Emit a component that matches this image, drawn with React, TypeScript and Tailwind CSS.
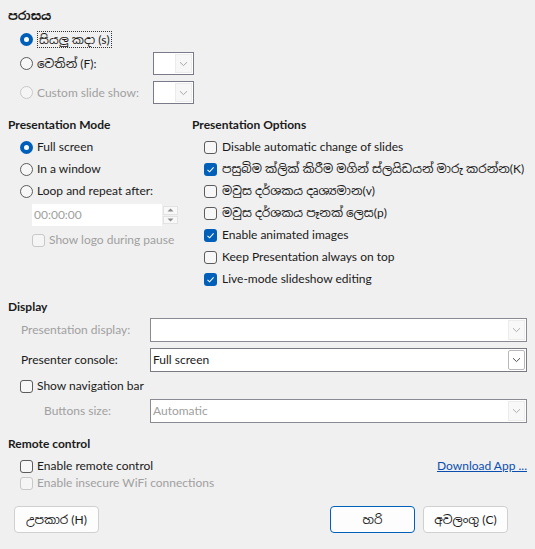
import React from "react";

const FONT = { fontFamily: 'Lato, "Noto Sans Sinhala", "Noto Sans", sans-serif' };

function Radio({ checked = false, disabled = false }: { checked?: boolean; disabled?: boolean }) {
  if (checked)
    return (
      <span className="w-[13px] h-[13px] shrink-0 rounded-full bg-[#005fb8] flex items-center justify-center">
        <span className="w-[5px] h-[5px] rounded-full bg-white" />
      </span>
    );
  return (
    <span
      className={
        disabled
          ? "w-[13px] h-[13px] shrink-0 rounded-full border border-[#c8c8c8] bg-[#f5f5f5]"
          : "w-[13px] h-[13px] shrink-0 rounded-full border border-[#5c5c5c] bg-[#f7f7f7]"
      }
    />
  );
}

function Check({ checked = false, disabled = false }: { checked?: boolean; disabled?: boolean }) {
  if (checked)
    return (
      <span className="w-[13px] h-[13px] shrink-0 rounded-[3px] bg-[#005fb8] flex items-center justify-center">
        <svg width="9" height="9" viewBox="0 0 9 9">
          <path d="M1.5 4.8 L3.6 6.8 L7.6 2.4" fill="none" stroke="white" strokeWidth="1.1" />
        </svg>
      </span>
    );
  return (
    <span
      className={
        disabled
          ? "w-[13px] h-[13px] shrink-0 rounded-[3px] border border-[#c8c8c8] bg-[#f5f5f5]"
          : "w-[13px] h-[13px] shrink-0 rounded-[3px] border border-[#5c5c5c] bg-[#f7f7f7]"
      }
    />
  );
}

function Chevron({ color = "#8a8a8a" }: { color?: string }) {
  return (
    <svg width="9" height="6" viewBox="0 0 9 6">
      <path d="M1 1.2 L4.5 4.6 L8 1.2" fill="none" stroke={color} strokeWidth="1" />
    </svg>
  );
}

function Combo({
  value = "",
  disabled = false,
  className = "",
}: {
  value?: string;
  disabled?: boolean;
  className?: string;
}) {
  return (
    <div
      className={
        "flex items-stretch bg-white border " +
        (disabled ? "border-[#8a8a92] " : "border-[#7a7a82] ") +
        className
      }
    >
      <div className={"flex-1 flex items-center pl-[2px] " + (disabled ? "text-[#a0a0a0]" : "text-[#1a1a1a]")}>
        {value}
      </div>
      <div
        className={
          disabled
            ? "w-[17px] my-[1px] mr-[1px] flex items-center justify-center bg-[#f8f8f8] border border-[#ececec]"
            : "w-[17px] my-[1px] mr-[1px] flex items-center justify-center bg-white border border-[#b8b8b8] rounded-[2px]"
        }
      >
        <Chevron color={disabled ? "#b0b0b0" : "#505050"} />
      </div>
    </div>
  );
}

function SmallCombo() {
  return (
    <div className="w-[41px] h-[23px] flex items-stretch bg-white border border-[#7a7a8a]">
      <div className="flex-1" />
      <div className="w-[17px] my-[1px] mr-[1px] flex items-center justify-center bg-[#f7f7f7] border border-[#ececec]">
        <Chevron color="#a8a8a8" />
      </div>
    </div>
  );
}

export default function App() {
  return (
    <div
      style={FONT}
      className="w-[535px] h-[549px] bg-[#f0f0f0] text-[12px] leading-[16px] text-[#1a1a1a] overflow-hidden relative"
    >
      {/* Range */}
      <div className="pl-[8px] pt-[6px]">
        <div className="h-[20px] flex items-center font-bold">පරාසය</div>
        <div className="pl-[12px] mt-[2px] flex flex-col">
          <div className="h-[22px] flex items-center gap-[4px]">
            <Radio checked />
            <span className="border border-dotted border-[#333] px-[1px] leading-[15px]">සියලු කදා (s)</span>
          </div>
          <div className="h-[23px] mt-[2px] flex items-center">
            <div className="w-[133px] flex items-center gap-[4px]">
              <Radio />
              <span>වෙතින් (F):</span>
            </div>
            <SmallCombo />
          </div>
          <div className="h-[23px] mt-[6px] flex items-center">
            <div className="w-[133px] flex items-center gap-[4px] text-[#a0a0a0]">
              <Radio disabled />
              <span>Custom slide show:</span>
            </div>
            <SmallCombo />
          </div>
        </div>
      </div>

      {/* Mode + Options */}
      <div className="flex mt-[11px]">
        <div className="w-[192px] pl-[8px]">
          <div className="h-[20px] flex items-center font-bold">Presentation Mode</div>
          <div className="pl-[12px] mt-[1px]">
            <div className="h-[22px] flex items-center gap-[4px]">
              <Radio checked />
              <span>Full screen</span>
            </div>
            <div className="h-[22px] flex items-center gap-[4px]">
              <Radio />
              <span>In a window</span>
            </div>
            <div className="h-[22px] flex items-center gap-[4px]">
              <Radio />
              <span>Loop and repeat after:</span>
            </div>
            <div className="pl-[12px] mt-[2px] flex items-stretch h-[22px]">
              <div className="w-[130px] bg-white flex items-center pl-[2px] text-[#a0a0a0]">00:00:00</div>
              <div className="w-[15px] ml-[1px] flex flex-col justify-center gap-[1px] py-[2px]">
                <div className="flex-1 flex items-center justify-center bg-[#f8f8f8] border border-[#e2e2e2]">
                  <svg width="7" height="4" viewBox="0 0 7 4">
                    <path d="M0.5 3.5 L3.5 0.5 L6.5 3.5 Z" fill="#8a8a8a" />
                  </svg>
                </div>
                <div className="flex-1 flex items-center justify-center bg-[#f8f8f8] border border-[#e2e2e2]">
                  <svg width="7" height="4" viewBox="0 0 7 4">
                    <path d="M0.5 0.5 L3.5 3.5 L6.5 0.5 Z" fill="#8a8a8a" />
                  </svg>
                </div>
              </div>
            </div>
            <div className="pl-[12px] h-[22px] mt-[3px] flex items-center gap-[4px] text-[#a0a0a0]">
              <Check disabled />
              <span className="whitespace-nowrap">Show logo during pause</span>
            </div>
          </div>
        </div>
        <div className="flex-1">
          <div className="h-[20px] flex items-center font-bold">Presentation Options</div>
          <div className="pl-[12px] mt-[1px]">
            {[
              [false, "Disable automatic change of slides"],
              [true, "පසුබිම ක්ලික් කිරීම මගින් ස්ලයිඩයන් මාරු කරන්න(K)"],
              [false, "මවුස දර්ශකය දෘශ්‍යමාන(v)"],
              [false, "මවුස දර්ශකය පෑනක් ලෙස(p)"],
              [true, "Enable animated images"],
              [false, "Keep Presentation always on top"],
              [true, "Live-mode slideshow editing"],
            ].map(([c, t], i) => (
              <div key={i} className="h-[22px] flex items-center gap-[5px]">
                <Check checked={c as boolean} />
                <span className="whitespace-nowrap">{t as string}</span>
              </div>
            ))}
          </div>
        </div>
      </div>

      {/* Display */}
      <div className="pl-[8px] pr-[8px] mt-[7px]">
        <div className="h-[20px] flex items-center font-bold">Display</div>
        <div className="mt-[1px] flex items-center h-[24px]">
          <div className="w-[142px] pl-[13px] text-[#a0a0a0]">Presentation display:</div>
          <Combo disabled className="flex-1 h-[24px] mr-[0px]" />
        </div>
        <div className="mt-[6px] flex items-center h-[24px]">
          <div className="w-[142px] pl-[13px]">Presenter console:</div>
          <Combo value="Full screen" className="flex-1 h-[24px]" />
        </div>
        <div className="h-[22px] mt-[3px] pl-[12px] flex items-center gap-[4px]">
          <Check />
          <span>Show navigation bar</span>
        </div>
        <div className="mt-[2px] flex items-center h-[24px]">
          <div className="w-[142px] pl-[36px] text-[#a0a0a0]">Buttons size:</div>
          <Combo disabled value="Automatic" className="flex-1 h-[24px]" />
        </div>
      </div>

      {/* Remote */}
      <div className="pl-[8px] pr-[8px] mt-[11px]">
        <div className="h-[20px] flex items-center font-bold">Remote control</div>
        <div className="pl-[12px] mt-[2px] h-[20px] flex items-center">
          <div className="flex items-center gap-[4px] flex-1">
            <Check />
            <span>Enable remote control</span>
          </div>
          <span className="text-[#0a4fb0] underline mr-[0px]">Download App ...</span>
        </div>
        <div className="pl-[12px] h-[14px] flex items-center gap-[4px] text-[#a0a0a0]">
          <Check disabled />
          <span>Enable insecure WiFi connections</span>
        </div>
      </div>

      {/* Buttons */}
      <div className="flex items-center px-[14px] mt-[16px]">
        <button className="w-[85px] h-[27px] bg-[#fdfdfd] border border-[#d0d0d0] rounded-[4px]">උපකාර (H)</button>
        <div className="flex-1" />
        <button className="w-[85px] h-[27px] bg-[#fdfdfd] border border-[#005fb8] rounded-[4px]">හරි</button>
        <button className="w-[85px] h-[27px] ml-[8px] mr-[13px] bg-[#fdfdfd] border border-[#d0d0d0] rounded-[4px]">අවලංගු (C)</button>
      </div>
    </div>
  );
}
